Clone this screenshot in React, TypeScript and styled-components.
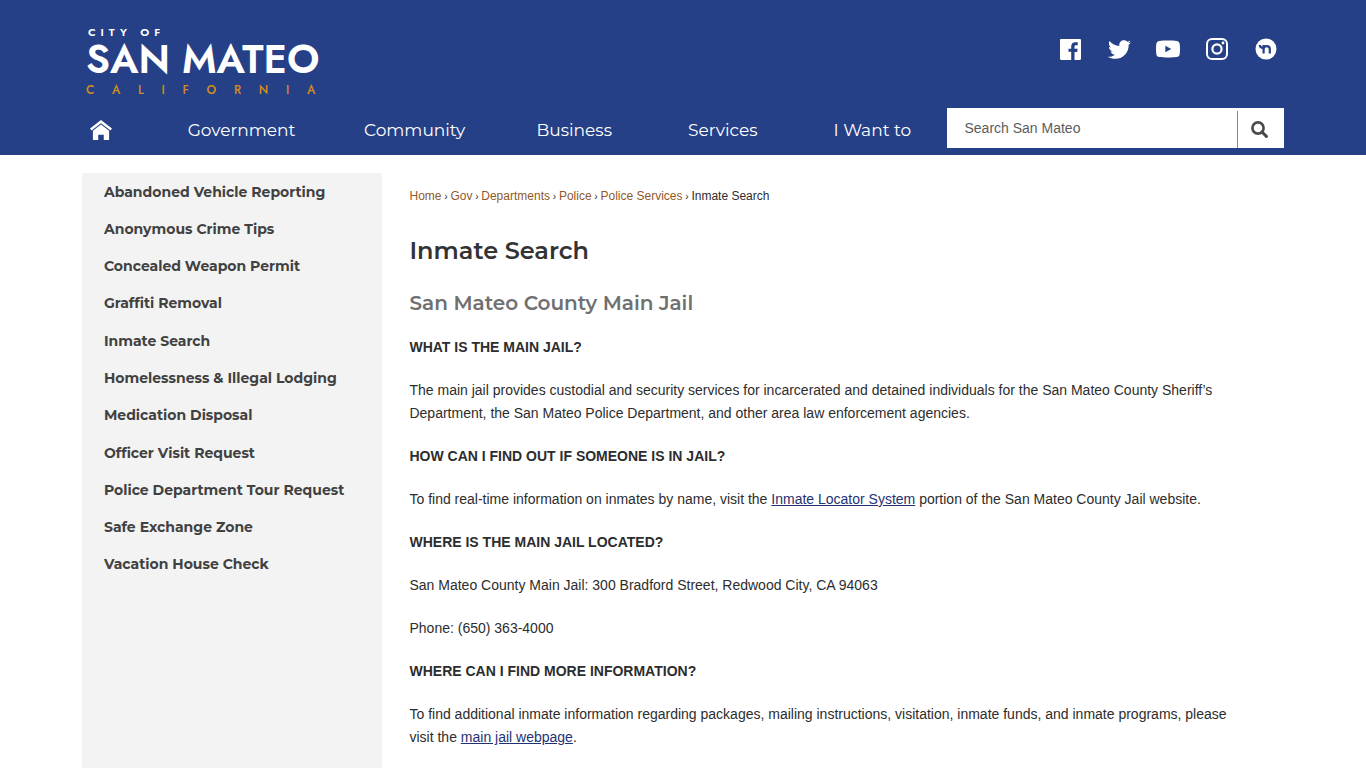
import React from "react";
import styled, { createGlobalStyle } from "styled-components";
import { FaTwitter } from "react-icons/fa";

const display = `Montserrat, Inter, "Open Sans", sans-serif`;
const body = `"Liberation Sans", Arial, sans-serif`;
const blue = "#264087";

const GlobalStyle = createGlobalStyle`
  *, *::before, *::after { box-sizing: border-box; }
  body { margin: 0; background: #fff; color: #2d2d2d; font-family: ${body}; }
`;

const Page = styled.div`
  min-height: 100vh;
  display: flex;
  flex-direction: column;
`;

const Header = styled.header`
  background: ${blue};
  padding: 24px 6% 7px;
  display: flex;
  flex-direction: column;
  gap: 8px;
`;

const Masthead = styled.div`
  display: flex;
  justify-content: space-between;
  align-items: flex-start;
`;

const Logo = styled.a`
  display: flex;
  flex-direction: column;
  height: 76px;
  padding-left: 4px;
  color: #fff;
  text-decoration: none;
  font-family: Jost, "Josefin Sans", Lato, sans-serif;
  font-weight: 600;
  white-space: nowrap;
`;

const LogoTop = styled.span`
  font-size: 11px;
  line-height: 16px;
  letter-spacing: 5px;
  padding-left: 2px;
`;

const LogoName = styled.span`
  font-size: 40px;
  line-height: 38px;
  padding-bottom: 3px;
`;

const LogoState = styled.span`
  display: flex;
  justify-content: space-between;
  font-size: 12px;
  line-height: 18px;
  font-weight: 500;
  color: #d68d17;
  padding-right: 4px;
`;

const Social = styled.div`
  display: flex;
  gap: 25px;
  padding: 13px 6px 0 0;
`;

const SocialLink = styled.a`
  display: flex;
  align-items: center;
  justify-content: center;
  width: 24px;
  height: 24px;
  color: #fff;
`;

const NavRow = styled.div`
  display: flex;
  align-items: center;
  height: 40px;
`;

const Nav = styled.nav`
  flex: 1;
  display: grid;
  grid-template-columns: 72fr 175fr 171fr 148fr 149fr 150fr;
  align-items: center;
  justify-items: center;
  padding-top: 3px;
`;

const NavLink = styled.a`
  color: #fff;
  text-decoration: none;
  font-family: ${display};
  font-size: 17px;
  line-height: 24px;
  font-weight: 400;
  white-space: nowrap;
`;

const HomeLink = styled(NavLink)`
  display: flex;
  justify-self: start;
  padding-left: 8px;
`;

const Search = styled.form`
  display: flex;
  width: 28%;
  height: 40px;
  background: #fff;
`;

const SearchInput = styled.input`
  flex: 1;
  min-width: 0;
  border: 0;
  outline: 0;
  background: none;
  padding: 0 17px;
  font-family: ${body};
  font-size: 14px;
  color: #4a4a4a;
  &::placeholder { color: #5c5c5c; opacity: 1; }
`;

const SearchButton = styled.button`
  width: 47px;
  margin-top: 3px;
  padding: 0 3px 0 0;
  border: 0;
  border-left: 1px solid #8a8a8a;
  background: none;
  color: #4a4a4a;
  display: flex;
  align-items: center;
  justify-content: center;
  cursor: pointer;
`;

const Columns = styled.div`
  flex: 1;
  display: grid;
  grid-template-columns: 25% 1fr;
  padding: 18px 6% 0;
`;

const Sidebar = styled.nav`
  background: #f3f3f3;
  padding: 0 22px;
`;

const SideList = styled.ul`
  list-style: none;
  margin: 0;
  padding: 0;
  height: 410px;
  display: grid;
  grid-auto-rows: 1fr;
  align-items: center;
`;

const SideLink = styled.a`
  color: #414141;
  text-decoration: none;
  font-family: ${display};
  font-size: 14px;
  line-height: 24px;
  font-weight: 700;
  white-space: nowrap;
`;

const Content = styled.main`
  padding: 15px 36px 16px 27px;
`;

const Crumbs = styled.nav`
  font-size: 12px;
  line-height: 16px;
  color: #2d2d2d;
`;

const Crumb = styled.a`
  color: #91592a;
  text-decoration: none;
`;

const Separator = styled.span`
  font-size: 10px;
`;

const Title = styled.h1`
  margin: 30px 0 0;
  font-family: ${display};
  font-size: 24px;
  line-height: 32px;
  font-weight: 600;
  color: #333;
`;

const Subtitle = styled.h2`
  margin: 24px 0 0;
  font-family: ${display};
  font-size: 20px;
  line-height: 25px;
  font-weight: 600;
  color: #707070;
`;

const Question = styled.h3`
  margin: 20px 0 0;
  font-size: 14px;
  line-height: 23px;
  font-weight: 700;
`;

const Text = styled.p`
  margin: 20px 0 0;
  font-size: 14px;
  line-height: 23px;
`;

const TextLink = styled.a`
  color: #1f3272;
  text-decoration: underline;
`;

const navItems = ["Government", "Community", "Business", "Services", "I Want to"];

const sideItems = [
  "Abandoned Vehicle Reporting",
  "Anonymous Crime Tips",
  "Concealed Weapon Permit",
  "Graffiti Removal",
  "Inmate Search",
  "Homelessness & Illegal Lodging",
  "Medication Disposal",
  "Officer Visit Request",
  "Police Department Tour Request",
  "Safe Exchange Zone",
  "Vacation House Check",
];

const crumbs = ["Home", "Gov", "Departments", "Police", "Police Services"];

const FacebookIcon = () => (
  <svg width="21" height="21" viewBox="0 0 24 24" fill="currentColor">
    <path d="M22.676 0H1.324C.593 0 0 .593 0 1.324v21.352C0 23.408.593 24 1.324 24h11.494v-9.294H9.689v-3.621h3.129V8.41c0-3.099 1.894-4.785 4.659-4.785 1.325 0 2.464.097 2.796.141v3.24h-1.921c-1.5 0-1.792.721-1.792 1.771v2.311h3.584l-.465 3.63H16.56V24h6.115c.733 0 1.325-.592 1.325-1.324V1.324C24 .593 23.408 0 22.676 0" />
  </svg>
);

const YoutubeIcon = () => (
  <svg width="24" height="24" viewBox="0 0 24 24" fill="currentColor">
    <path
      fillRule="evenodd"
      d="M3.5 3.9C8 3.3 16 3.3 20.5 3.9c2 .3 3 1.3 3.2 3.2.4 3.2.4 6.5 0 9.8-.2 1.9-1.2 2.9-3.2 3.2-4.5.6-12.5.6-17 0-2-.3-3-1.3-3.2-3.2-.4-3.3-.4-6.6 0-9.8C.5 5.2 1.5 4.2 3.5 3.9zM9.3 8.7v6.6l6-3.3z"
    />
  </svg>
);

const InstagramIcon = () => (
  <svg width="22" height="22" viewBox="0 0 22 22" fill="none" stroke="currentColor" strokeWidth="2">
    <rect x="1" y="1" width="20" height="20" rx="5" />
    <circle cx="11" cy="11" r="4.6" strokeWidth="2.2" />
    <circle cx="17" cy="5" r="1.4" fill="currentColor" stroke="none" />
  </svg>
);

const NextdoorIcon = () => (
  <svg width="22" height="22" viewBox="0 0 22 22">
    <circle cx="11" cy="11" r="10.5" fill="currentColor" />
    <path
      d="M4.8 7c0 1.6.8 2.6 2.8 2.8M8.6 15.6v-4.5c0-1.9 1.2-2.9 3.1-2.9s3.1 1 3.1 2.9v4.5M8.6 11V7"
      fill="none"
      stroke={blue}
      strokeWidth="2.2"
    />
  </svg>
);

const HomeIcon = () => (
  <svg width="22" height="20" viewBox="0 0 23 21" fill="currentColor">
    <path d="M11.5 0 0 9l1.5 2 10-7.6 10 7.6L23 9z" />
    <path d="M11.5 4.8 3 11.3V21h5.6v-5.6h5.8V21H20v-9.7z" />
  </svg>
);

const SearchIcon = () => (
  <svg width="17" height="17" viewBox="0 0 17 17" fill="none" stroke="currentColor">
    <circle cx="7" cy="7" r="5.6" strokeWidth="2.6" />
    <path d="M11 11l4.4 4.4" strokeWidth="3" strokeLinecap="round" />
  </svg>
);

export default function App() {
  return (
    <Page>
      <GlobalStyle />
      <Header>
        <Masthead>
          <Logo href="#">
            <LogoTop>CITY OF</LogoTop>
            <LogoName>SAN MATEO</LogoName>
            <LogoState>
              {"CALIFORNIA".split("").map((c, i) => (
                <span key={i}>{c}</span>
              ))}
            </LogoState>
          </Logo>
          <Social>
            <SocialLink href="#" aria-label="Facebook"><FacebookIcon /></SocialLink>
            <SocialLink href="#" aria-label="Twitter"><FaTwitter size={23} /></SocialLink>
            <SocialLink href="#" aria-label="YouTube"><YoutubeIcon /></SocialLink>
            <SocialLink href="#" aria-label="Instagram"><InstagramIcon /></SocialLink>
            <SocialLink href="#" aria-label="Nextdoor"><NextdoorIcon /></SocialLink>
          </Social>
        </Masthead>
        <NavRow>
          <Nav>
            <HomeLink href="#" aria-label="Home"><HomeIcon /></HomeLink>
            {navItems.map((item) => (
              <NavLink key={item} href="#">{item}</NavLink>
            ))}
          </Nav>
          <Search onSubmit={(e) => e.preventDefault()}>
            <SearchInput type="text" aria-label="Search San Mateo" placeholder="Search San Mateo" />
            <SearchButton type="submit" aria-label="Search"><SearchIcon /></SearchButton>
          </Search>
        </NavRow>
      </Header>
      <Columns>
        <Sidebar>
          <SideList>
            {sideItems.map((item) => (
              <li key={item}><SideLink href="#">{item}</SideLink></li>
            ))}
          </SideList>
        </Sidebar>
        <Content>
          <Crumbs>
            {crumbs.map((c) => (
              <React.Fragment key={c}>
                <Crumb href="#">{c}</Crumb>
                <Separator>{" › "}</Separator>
              </React.Fragment>
            ))}
            Inmate Search
          </Crumbs>
          <Title>Inmate Search</Title>
          <Subtitle>San Mateo County Main Jail</Subtitle>
          <Question>WHAT IS THE MAIN JAIL?</Question>
          <Text>
            The main jail provides custodial and security services for incarcerated and detained
            individuals for the San Mateo County Sheriff’s Department, the San Mateo Police
            Department, and other area law enforcement agencies.
          </Text>
          <Question>HOW CAN I FIND OUT IF SOMEONE IS IN JAIL?</Question>
          <Text>
            To find real-time information on inmates by name, visit the{" "}
            <TextLink href="#">Inmate Locator System</TextLink> portion of the San Mateo County Jail
            website.
          </Text>
          <Question>WHERE IS THE MAIN JAIL LOCATED?</Question>
          <Text>San Mateo County Main Jail: 300 Bradford Street, Redwood City, CA 94063</Text>
          <Text>Phone: (650) 363-4000</Text>
          <Question>WHERE CAN I FIND MORE INFORMATION?</Question>
          <Text>
            To find additional inmate information regarding packages, mailing instructions,
            visitation, inmate funds, and inmate programs, please visit the{" "}
            <TextLink href="#">main jail webpage</TextLink>.
          </Text>
        </Content>
      </Columns>
    </Page>
  );
}
